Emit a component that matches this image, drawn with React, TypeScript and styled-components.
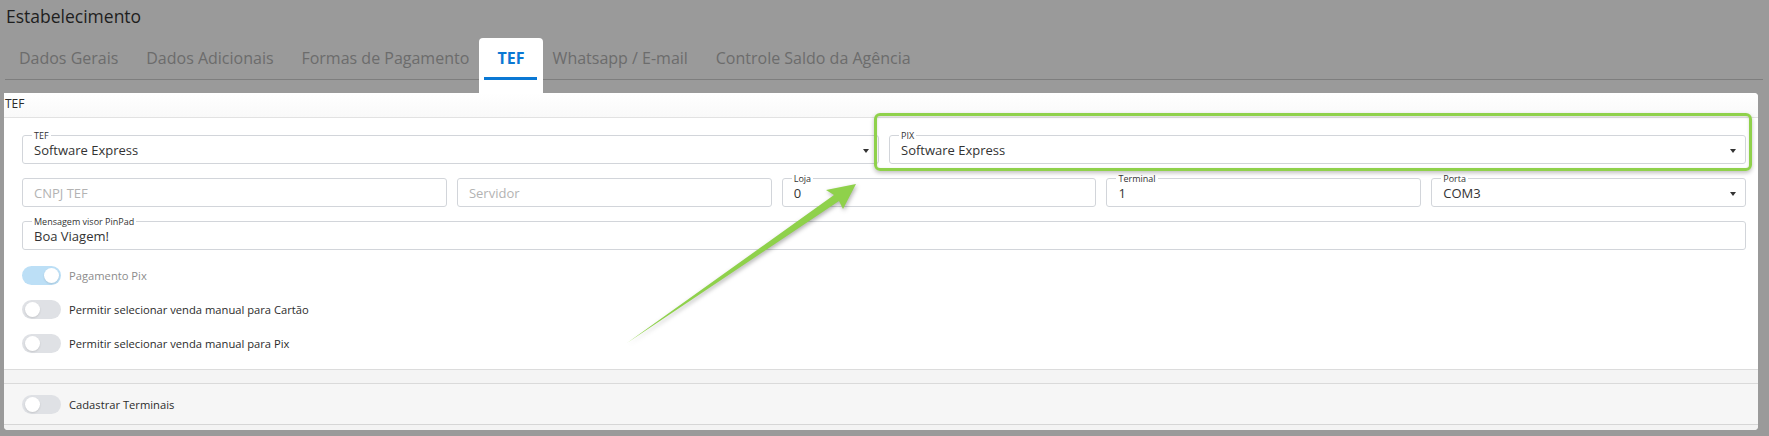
import React, { useState } from "react";
import styled, { createGlobalStyle } from "styled-components";

const GlobalStyle = createGlobalStyle`
  html, body {
    margin: 0;
    padding: 0;
    background: #9a9a9a;
    font-family: "Open Sans", "Liberation Sans", sans-serif;
  }
  * { box-sizing: border-box; }
`;

const Page = styled.div`
  position: relative;
  width: 1769px;
  height: 436px;
  overflow: hidden;
  background: #9a9a9a;
`;

const Title = styled.h1`
  margin: 0;
  padding: 4px 0 0 6px;
  height: 38px;
  font-size: 17.5px;
  line-height: 24px;
  font-weight: 400;
  color: #1e1e1e;
`;

const TabBar = styled.ul`
  display: flex;
  align-items: flex-start;
  list-style: none;
  margin: 0 6px 0 5px;
  padding: 0;
  height: 55px;
  background: linear-gradient(#7e7e7e, #7e7e7e) 0 41px / 100% 1px no-repeat;
`;

const Tab = styled.li<{ $active?: boolean }>`
  position: relative;
  height: ${(p) => (p.$active ? "55px" : "41px")};
  line-height: 41px;
  padding: 0 ${(p) => (p.$active ? "18.8px" : "13.95px")};
  margin: 0 ${(p) => (p.$active ? "-4.6px" : "0")};
  font-size: 16px;
  font-weight: ${(p) => (p.$active ? 700 : 400)};
  color: ${(p) => (p.$active ? "#0a78d4" : "#6c6c6c")};
  background: ${(p) => (p.$active ? "#ffffff" : "transparent")};
  border-radius: 4px 4px 0 0;
  white-space: nowrap;
  cursor: pointer;

  &::after {
    content: "";
    display: ${(p) => (p.$active ? "block" : "none")};
    position: absolute;
    left: 5px;
    right: 6px;
    top: 39px;
    height: 3px;
    background: #0a78d4;
  }
`;

const Panel = styled.section`
  margin: 0 11px 0 4px;
  background: #f3f3f3;
  border-radius: 0 4px 4px 4px;
  overflow: hidden;
`;

const PanelHeading = styled.div`
  height: 25px;
  padding: 0 0 0 1px;
  font-size: 12px;
  line-height: 22px;
  color: #2b2b2b;
  background: linear-gradient(#ffffff, #f9f9f9);
  border-bottom: 1px solid #e2e2e2;
`;

const PanelBody = styled.div`
  background: #ffffff;
  padding: 17px 12px 16px 18px;
  border-bottom: 1px solid #dcdcdc;
  display: flex;
  flex-direction: column;
`;

const Row = styled.div<{ $cols: string }>`
  display: grid;
  grid-template-columns: ${(p) => p.$cols};
  gap: 10px;
  margin-bottom: 14px;
`;

const Field = styled.div<{ $select?: boolean }>`
  position: relative;
  height: 29px;
  border: 1px solid #d2d5da;
  border-radius: 3px;
  background: #fff;
  padding: 0 ${(p) => (p.$select ? "30px" : "12px")} 0 11px;
  display: flex;
  align-items: center;
`;

const Legend = styled.span`
  position: absolute;
  top: -6px;
  left: 9px;
  padding: 0 2px;
  background: #fff;
  font-size: 9px;
  line-height: 11px;
  color: #333;
`;

const Value = styled.span<{ $placeholder?: boolean }>`
  font-size: 13px;
  color: ${(p) => (p.$placeholder ? "#b3b3b3" : "#333333")};
`;

const Caret = styled.span`
  position: absolute;
  right: 9px;
  top: 13px;
  width: 0;
  height: 0;
  border-left: 3px solid transparent;
  border-right: 3px solid transparent;
  border-top: 4px solid #333;
`;

const ToggleList = styled.div`
  display: flex;
  flex-direction: column;
  gap: 14px;
  padding-top: 1px;
`;

const ToggleRow = styled.label`
  display: flex;
  align-items: center;
  gap: 8px;
  height: 20px;
  cursor: pointer;
`;

const Switch = styled.span<{ $on?: boolean }>`
  position: relative;
  width: 39px;
  height: 19px;
  border-radius: 10px;
  background: ${(p) => (p.$on ? "#bcdff6" : "#dfe1e5")};
  flex-shrink: 0;

  &::after {
    content: "";
    position: absolute;
    top: 2px;
    left: ${(p) => (p.$on ? "22px" : "3px")};
    width: 15px;
    height: 15px;
    border-radius: 50%;
    background: #fff;
    box-shadow: 0 1px 2px rgba(0, 0, 0, 0.12);
  }
`;

const ToggleText = styled.span<{ $muted?: boolean }>`
  font-size: 11.2px;
  color: ${(p) => (p.$muted ? "#8c8c8c" : "#2b2b2b")};
`;

const Spacer = styled.div`
  height: 13px;
  background: #f4f4f4;
`;

const SubCard = styled.div`
  height: 42px;
  padding: 0 18px;
  display: flex;
  align-items: center;
  background: #f6f6f6;
  border-top: 1px solid #dadada;
  border-bottom: 1px solid #d6d6d6;
`;

const PanelFoot = styled.div`
  height: 5px;
  background: #f3f3f3;
`;

const Highlight = styled.div`
  position: absolute;
  left: 874px;
  top: 113px;
  width: 878px;
  height: 58px;
  border: 3.5px solid #8fd14b;
  border-radius: 6px;
  box-shadow: 0 2px 4px rgba(0, 0, 0, 0.25), inset 0 1px 3px rgba(0, 0, 0, 0.15);
  pointer-events: none;
`;

const ArrowSvg = styled.svg`
  position: absolute;
  left: 0;
  top: 0;
  pointer-events: none;
  filter: drop-shadow(1px 2px 2px rgba(0, 0, 0, 0.3));
`;

const tabs = [
  "Dados Gerais",
  "Dados Adicionais",
  "Formas de Pagamento",
  "TEF",
  "Whatsapp / E-mail",
  "Controle Saldo da Agência",
];

type FieldDef = { label?: string; value: string; select?: boolean; placeholder?: boolean };

const row1: FieldDef[] = [
  { label: "TEF", value: "Software Express", select: true },
  { label: "PIX", value: "Software Express", select: true },
];

const row2: FieldDef[] = [
  { value: "CNPJ TEF", placeholder: true },
  { value: "Servidor", placeholder: true },
  { label: "Loja", value: "0" },
  { label: "Terminal", value: "1" },
  { label: "Porta", value: "COM3", select: true },
];

function FormField({ f }: { f: FieldDef }) {
  return (
    <Field $select={f.select}>
      {f.label && <Legend>{f.label}</Legend>}
      <Value $placeholder={f.placeholder}>{f.value}</Value>
      {f.select && <Caret />}
    </Field>
  );
}

export default function App() {
  const [active, setActive] = useState("TEF");
  const [toggles, setToggles] = useState({ pix: true, cartao: false, manualPix: false, terminais: false });

  return (
    <Page>
      <GlobalStyle />
      <Title>Estabelecimento</Title>
      <TabBar>
        {tabs.map((t) => (
          <Tab key={t} $active={t === active} onClick={() => setActive(t)}>
            {t}
          </Tab>
        ))}
      </TabBar>

      <Panel>
        <PanelHeading>TEF</PanelHeading>
        <PanelBody>
          <Row $cols="1fr 1fr">
            {row1.map((f) => (
              <FormField key={f.label} f={f} />
            ))}
          </Row>
          <Row $cols="1.35fr 1fr 1fr 1fr 1fr">
            {row2.map((f) => (
              <FormField key={f.value} f={f} />
            ))}
          </Row>
          <Row $cols="1fr">
            <FormField f={{ label: "Mensagem visor PinPad", value: "Boa Viagem!" }} />
          </Row>
          <ToggleList>
            <ToggleRow onClick={() => setToggles({ ...toggles, pix: !toggles.pix })}>
              <Switch $on={toggles.pix} />
              <ToggleText $muted>Pagamento Pix</ToggleText>
            </ToggleRow>
            <ToggleRow onClick={() => setToggles({ ...toggles, cartao: !toggles.cartao })}>
              <Switch $on={toggles.cartao} />
              <ToggleText>Permitir selecionar venda manual para Cartão</ToggleText>
            </ToggleRow>
            <ToggleRow onClick={() => setToggles({ ...toggles, manualPix: !toggles.manualPix })}>
              <Switch $on={toggles.manualPix} />
              <ToggleText>Permitir selecionar venda manual para Pix</ToggleText>
            </ToggleRow>
          </ToggleList>
        </PanelBody>
        <Spacer />
        <SubCard>
          <ToggleRow onClick={() => setToggles({ ...toggles, terminais: !toggles.terminais })}>
            <Switch $on={toggles.terminais} />
            <ToggleText>Cadastrar Terminais</ToggleText>
          </ToggleRow>
        </SubCard>
        <PanelFoot />
      </Panel>

      {/* anotação: destaque do campo PIX */}
      <Highlight />
      <ArrowSvg width="1769" height="436" viewBox="0 0 1769 436">
        <polygon
          points="627,343 834,195 826,190 856,184 843,209 839,201"
          fill="#8fd14b"
        />
      </ArrowSvg>
    </Page>
  );
}
